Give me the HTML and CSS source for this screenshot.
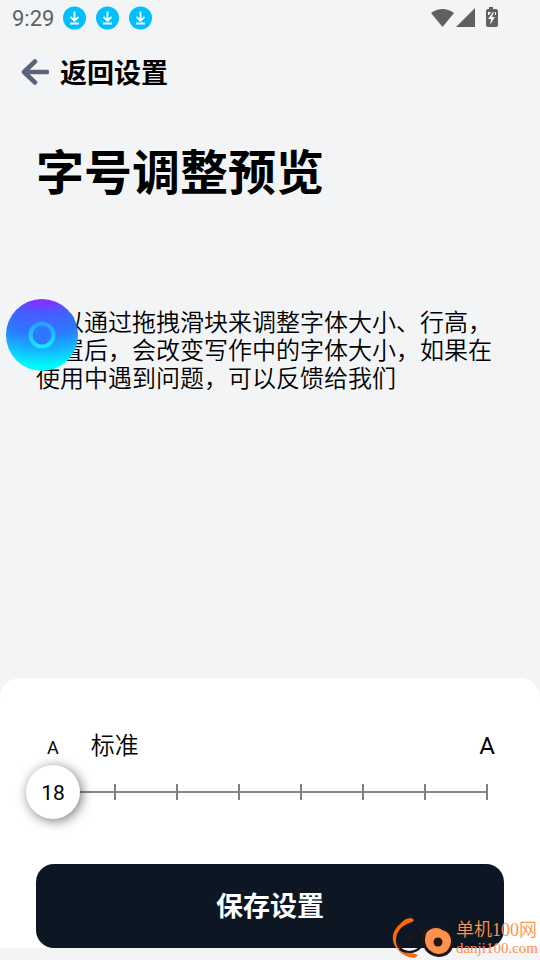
FILE: index.html
```html
<!DOCTYPE html>
<html lang="zh-CN">
<head>
<meta charset="utf-8">
<meta name="viewport" content="width=device-width, initial-scale=1">
<title>字号调整预览</title>
<link rel="stylesheet" href="styles.css">
</head>
<body>
<svg class="defs" aria-hidden="true">
  <symbol id="download" viewBox="0 0 24 24">
    <circle cx="11.500" cy="12" r="11.500" fill="#00bfff"/>
    <path d="M11.500 5.500v9M7.500 10.800l4 4 4-4M7 17.500h9" fill="none" stroke="#fff" stroke-width="1.800"/>
  </symbol>
</svg>
<div class="status">
  <span class="time">9:29</span>
  <svg class="notice" aria-hidden="true"><use href="#download"/></svg>
  <svg class="notice" aria-hidden="true"><use href="#download"/></svg>
  <svg class="notice" aria-hidden="true"><use href="#download"/></svg>
  <svg class="signals" viewBox="0 0 68 22" aria-hidden="true" fill="#606060">
    <path d="M0 6Q11.500-2 23 6L11.500 20Z"/>
    <path d="M44 1v19H25Z"/>
    <path d="M58 0h4v2h3q2 0 2 2v14q0 2-2 2H57q-2 0-2-2V4q0-2 2-2h1Z"/>
    <path d="M62 5l-5 7h3l-1 6 5-8h-3l2-5Z" fill="#f3f4f6"/>
    <path d="M57 5h3l-2 3h-1ZM64 5h1v3h-1Z" fill="#f3f4f6"/>
  </svg>
</div>
<header class="bar">
  <a class="back" href="#">
    <svg class="arrow" viewBox="0 0 28 26" aria-hidden="true"><path d="M14 2.500L3 13L14 23.500M3 13H26" fill="none" stroke="#5b6478" stroke-width="4.500" stroke-linecap="round" stroke-linejoin="round"/></svg>
    <span class="back-text">返回设置</span>
  </a>
</header>
<main class="preview">
  <h1 class="title">字号调整预览</h1>
  <p class="sample">可以通过拖拽滑块来调整字体大小、行高，设置后，会改变写作中的字体大小，如果在使用中遇到问题，可以反馈给我们</p>
  <button class="bubble" type="button" aria-label="悬浮窗">
    <svg viewBox="0 0 72 72" aria-hidden="true">
      <defs>
        <radialGradient id="ball" gradientUnits="userSpaceOnUse" cx="36" cy="-58" r="130">
          <stop offset=".44" stop-color="#8a2bff"/><stop offset=".49" stop-color="#7a38ff"/>
          <stop offset=".54" stop-color="#4a58ff"/><stop offset=".72" stop-color="#2a7aff"/>
          <stop offset=".85" stop-color="#14b8ff"/><stop offset=".95" stop-color="#00f4fa"/><stop offset="1" stop-color="#00ffff"/>
        </radialGradient>
        <linearGradient id="ring" x1="0" y1="0" x2="0" y2="1"><stop offset="0" stop-color="#2a9eff"/><stop offset="1" stop-color="#17e8ff"/></linearGradient>
      </defs>
      <circle cx="36" cy="36" r="36" fill="url(#ball)"/>
      <circle cx="36" cy="36" r="11.500" fill="#297aff" stroke="url(#ring)" stroke-width="4"/>
    </svg>
  </button>
</main>
<form class="sheet">
  <div class="labels">
    <span class="small">A</span>
    <label class="standard" for="size">标准</label>
    <span class="large">A</span>
  </div>
  <div class="slider">
    <div class="ticks"><i></i><i></i><i></i><i></i><i></i><i></i><i></i><i></i></div>
    <input class="range" id="size" type="range" min="18" max="32" step="2" value="18">
    <output class="value" for="size">18</output>
  </div>
  <button class="save" type="button">保存设置</button>
</form>
<div class="watermark">
  <svg class="mark" viewBox="0 0 64 44" aria-hidden="true">
    <circle cx="19" cy="22" r="14" fill="none" stroke="#1b191c" stroke-width="2"/>
    <path d="M19 18v8M15 22h8" stroke="#1b191c" stroke-width="2"/>
    <path d="M8 33Q14 38 24 35Q30 32 33 26" fill="none" stroke="#1b191c" stroke-width="2"/>
    <path d="M9 8Q14 2 20 2Q25 4 21 6Q10 9 6 18Q2 31 13 37Q20 36 27 39Q25 42 23 42Q14 41 9 36Q0 28 2 19Q4 12 9 8Z" fill="#ff6a08"/>
    <path d="M32 18Q34 11 40 12Q45 8 51 12Q63 14 63 26Q61 41 47 41Q33 39 31 25Z" fill="#211815"/>
    <path d="M36 16Q40 12 45 12Q49 12 51 14Q60 16 60 26Q58 38 47 38Q36 36 34 26Q34 19 36 16Z" fill="#ff914d"/>
    <circle cx="47" cy="26" r="4.500" fill="#211815"/>
  </svg>
  <div class="brand"><span>单机100网</span><small>danji100.com</small></div>
</div>
<script src="app.js"></script>
</body>
</html>
```

FILE: styles.css
```css
* { box-sizing: border-box; }
body {
  position: relative;
  display: flex;
  flex-direction: column;
  min-height: 100vh;
  margin: 0;
  padding-bottom: 12px;
  background: #f3f4f6;
  color: #000;
  font-family: Roboto, "Noto Sans CJK SC", sans-serif;
  font-weight: 350;
}
button { border: 0; font-family: inherit; cursor: pointer; }
.defs { position: absolute; width: 0; height: 0; }
.status {
  display: flex;
  align-items: center;
  gap: 9px;
  height: 36px;
  padding: 0 41px 0 12px;
}
.time { color: #606060; font-size: 22px; font-weight: 400; }
.notice { width: 24px; height: 24px; }
.signals { width: 68px; height: 22px; margin-left: auto; }
.bar { display: flex; align-items: center; height: 72px; padding: 0 21px; }
.back {
  display: flex;
  align-items: center;
  gap: 11px;
  color: #000;
  font-size: 27px;
  font-weight: 700;
  line-height: 40px;
  text-decoration: none;
}
.back-text { padding-top: 4px; }
.arrow { width: 28px; height: 26px; }
.preview { position: relative; flex: 1; padding: 30px 36px; }
.title { margin: 0 0 99px; font-size: 48px; font-weight: 700; line-height: 72px; }
.sample { margin: 0; font-size: 24px; line-height: 28px; }
.bubble {
  position: absolute;
  top: 191px;
  left: 6px;
  width: 72px;
  height: 72px;
  padding: 0;
  border-radius: 50%;
  background: none;
}
.bubble svg { display: block; }
.sheet { padding: 50px 36px 0; border-radius: 20px 20px 0 0; background: #fff; }
.labels { display: flex; align-items: baseline; height: 36px; padding: 0 9px 0 11px; line-height: 36px; }
.small, .large, .value { font-weight: 400; }
.small { font-size: 18px; }
.standard { margin-left: 32px; font-size: 24px; }
.large { margin-left: auto; font-size: 24px; }
.slider { position: relative; height: 54px; margin: 1px -10px 45px; }
.ticks {
  display: flex;
  justify-content: space-between;
  align-items: center;
  height: 54px;
  margin: 0 26px;
  background: linear-gradient(#888, #888) center / 100% 2px no-repeat;
}
.ticks i { width: 2px; height: 16px; background: #808080; }
.range {
  position: absolute;
  inset: 0;
  width: 100%;
  height: 54px;
  margin: 0;
  appearance: none;
  background: none;
}
.range::-webkit-slider-thumb {
  width: 54px;
  height: 54px;
  appearance: none;
  border-radius: 50%;
  background: #fff;
  box-shadow: 2px 2px 12px #0008;
}
.value {
  position: absolute;
  top: 0;
  left: 0;
  width: 54px;
  font-size: 21px;
  line-height: 56px;
  text-align: center;
  pointer-events: none;
}
.save {
  display: block;
  width: 100%;
  height: 84px;
  padding: 0 0 4px;
  border-radius: 18px;
  background: #0d1724;
  color: #fff;
  font-size: 27px;
  font-weight: 700;
}
.watermark {
  position: absolute;
  right: 2px;
  bottom: 0;
  display: flex;
  align-items: center;
  pointer-events: none;
}
.mark { width: 64px; height: 44px; }
.brand {
  display: flex;
  flex-direction: column;
  padding-left: 1px;
  color: #ff914d;
  font-family: "Liberation Serif", "Noto Sans CJK SC", serif;
  font-size: 18px;
  line-height: 20px;
}
.brand small { font-size: 15px; line-height: 16px; }
```

FILE: app.js
```js
const range = document.querySelector(".range");
const value = document.querySelector(".value");
range.addEventListener("input", () => {
  const part = (range.value - range.min) / (range.max - range.min);
  value.textContent = range.value;
  value.style.left = `calc((100% - 54px) * ${part})`;
});
```
